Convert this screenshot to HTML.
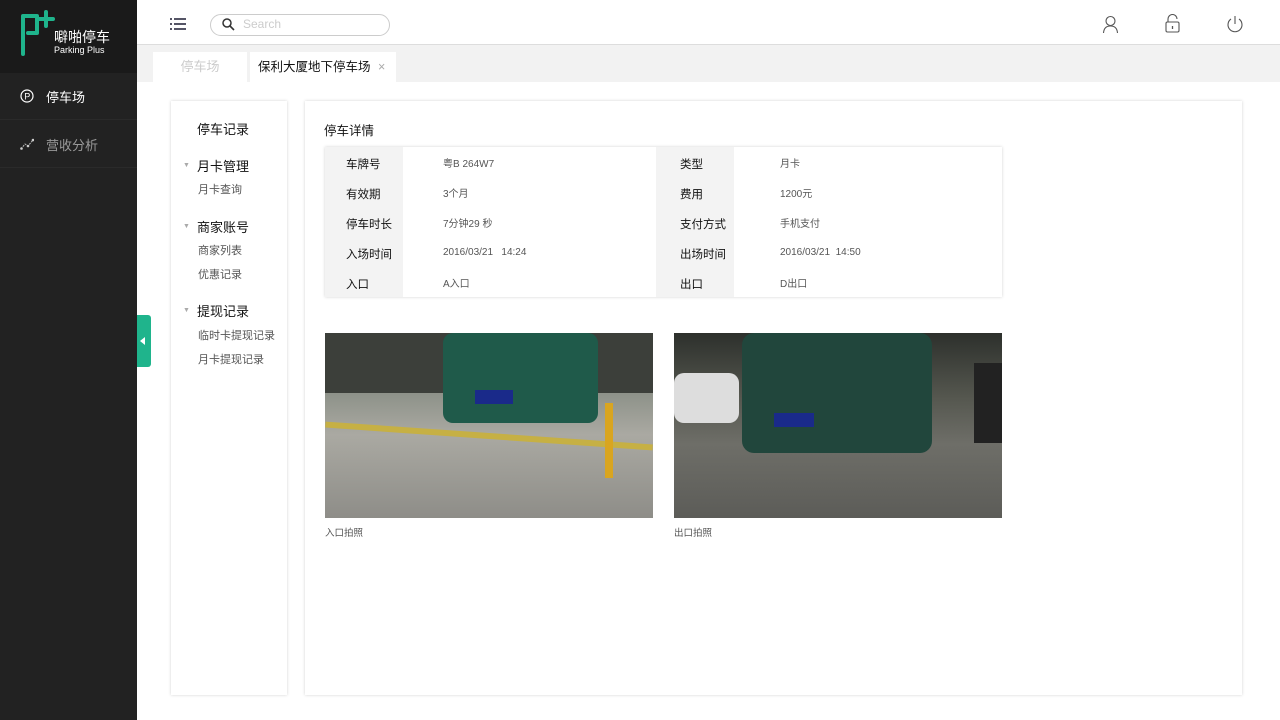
<!DOCTYPE html>
<html><head><meta charset="utf-8"><style>
*{margin:0;padding:0;box-sizing:border-box}
body{width:1280px;height:720px;overflow:hidden;font-family:"Liberation Sans","Noto Sans CJK SC",sans-serif;background:#fff;position:relative;color:#222}
.abs{position:absolute}
.side{left:0;top:0;width:137px;height:720px;background:#222}
.logo{left:0;top:0;width:137px;height:73px;background:#1a1a1a}
.nav{left:0;width:137px;height:47px;border-bottom:1px solid #2a2a2a;font-size:13px;display:flex;align-items:center;padding-left:20px}
.hdr{left:137px;top:0;width:1143px;height:45px;border-bottom:1px solid #ddd;background:#fff}
.tabs{left:137px;top:45px;width:1143px;height:37px;background:#f2f2f2}
.card{background:#fff;box-shadow:0 0 3px rgba(0,0,0,.18)}
.lm{font-size:13px;color:#111}
.ls{font-size:11px;color:#555}
table{border-collapse:collapse}
td{height:30px;font-size:11px}
td.k{background:#f3f3f3;width:78px;padding-left:21px;padding-top:3px;font-size:11.5px;color:#111}
td.k2{padding-left:24px}
td.v{width:253px;padding-left:40px;color:#555;font-size:10px}
td.v2{width:267px;padding-left:46px}
.ph{height:185px;overflow:hidden}
</style></head><body>
<div class="abs side"></div>
<div class="abs logo">
<svg class="abs" style="left:19px;top:9px" width="38" height="48" viewBox="0 0 38 48"><path d="M4 45V7h14v17H9" fill="none" stroke="#1fb48c" stroke-width="4" stroke-linecap="round" stroke-linejoin="round"/><path d="M27 3v14M20 10h14" stroke="#1fb48c" stroke-width="4" stroke-linecap="round"/></svg>
<div class="abs" style="left:54px;top:29px;color:#fff;font-size:14px;font-family:'Noto Sans CJK SC',sans-serif;line-height:16px">噼啪停车</div>
<div class="abs" style="left:54px;top:45px;color:#fff;font-size:9px">Parking Plus</div>
</div>
<div class="abs nav" style="top:73px;color:#fff"><svg width="14" height="14"><circle cx="7" cy="7" r="6" fill="none" stroke="#fff" stroke-width="1.2"/><text x="4.3" y="10.5" font-size="9" fill="#fff">P</text></svg><span style="margin-left:12px">停车场</span></div>
<div class="abs nav" style="top:121px;color:#999"><svg width="14" height="12"><path d="M1 11L5 6 8 8 13 2" fill="none" stroke="#bbb" stroke-width="1" stroke-dasharray="2 1"/><circle cx="1.5" cy="10.5" r="1.3" fill="#ccc"/><circle cx="8" cy="8" r="1.3" fill="#ccc"/><circle cx="13" cy="2" r="1.3" fill="#ccc"/></svg><span style="margin-left:12px">营收分析</span></div>

<div class="abs hdr">
<svg class="abs" style="left:33px;top:18px" width="16" height="12"><g fill="#556"><rect x="0" y="0" width="2" height="2"/><rect x="4" y="0" width="12" height="2"/><rect x="0" y="5" width="2" height="2"/><rect x="4" y="5" width="12" height="2"/><rect x="0" y="10" width="2" height="2"/><rect x="4" y="10" width="12" height="2"/></g></svg>
<div class="abs" style="left:73px;top:14px;width:180px;height:22px;border:1px solid #ccc;border-radius:11px"></div>
<svg class="abs" style="left:85px;top:18px" width="13" height="13"><circle cx="5" cy="5" r="4" fill="none" stroke="#333" stroke-width="1.5"/><path d="M8 8l4 4" stroke="#333" stroke-width="1.6"/></svg>
<div class="abs" style="left:106px;top:17px;font-size:12px;color:#ccc">Search</div>
<svg class="abs" style="left:965px;top:15px" width="17" height="18"><circle cx="8.5" cy="6" r="4.5" fill="none" stroke="#555" stroke-width="1.1"/><path d="M1.5 18Q2 11 8.5 11T15.5 18" fill="none" stroke="#555" stroke-width="1.1"/></svg>
<svg class="abs" style="left:1028px;top:14px" width="15" height="19"><path d="M3 8V5a4.5 4.5 0 0 1 9 0" fill="none" stroke="#555" stroke-width="1.1"/><rect x="1" y="8" width="13" height="10" rx="1.5" fill="none" stroke="#555" stroke-width="1.1"/><path d="M7.5 12v3" stroke="#555" stroke-width="1.3"/></svg>
<svg class="abs" style="left:1089px;top:15px" width="18" height="18"><path d="M5 4a7 7 0 1 0 8 0" fill="none" stroke="#555" stroke-width="1.1"/><path d="M9 1v8" stroke="#555" stroke-width="1.1"/></svg>
</div>
<div class="abs tabs">
<div class="abs" style="left:16px;top:7px;width:94px;height:30px;background:#fff;color:#ccc;font-size:13px;text-align:center;line-height:30px">停车场</div>
<div class="abs" style="left:113px;top:7px;width:146px;height:30px;background:#fff;color:#111;font-size:12.5px;line-height:31px;padding-left:8px">保利大厦地下停车场 <span style="color:#aaa;margin-left:4px">×</span></div>
</div>
<div class="abs" style="left:137px;top:315px;width:14px;height:52px;background:#1fb48c;border-radius:0 3px 3px 0"></div>
<div class="abs" style="left:140px;top:337px;width:0;height:0;border:4px solid transparent;border-right:5px solid #fff;border-left:0"></div>

<div class="abs card" style="left:171px;top:101px;width:116px;height:594px">
<div class="abs lm" style="left:26px;top:18px">停车记录</div>
<div class="abs" style="left:12px;top:61px;font-size:7px;color:#aaa">▼</div><div class="abs lm" style="left:26px;top:55px">月卡管理</div>
<div class="abs ls" style="left:27px;top:80px">月卡查询</div>
<div class="abs" style="left:12px;top:122px;font-size:7px;color:#aaa">▼</div><div class="abs lm" style="left:26px;top:116px">商家账号</div>
<div class="abs ls" style="left:27px;top:141px">商家列表</div>
<div class="abs ls" style="left:27px;top:165px">优惠记录</div>
<div class="abs" style="left:12px;top:206px;font-size:7px;color:#aaa">▼</div><div class="abs lm" style="left:26px;top:200px">提现记录</div>
<div class="abs ls" style="left:27px;top:226px">临时卡提现记录</div>
<div class="abs ls" style="left:27px;top:250px">月卡提现记录</div>
</div>

<div class="abs card" style="left:305px;top:101px;width:937px;height:594px">
<div class="abs" style="left:19px;top:19px;font-size:12.5px;color:#111">停车详情</div>
<div class="abs card" style="left:20px;top:46px;width:677px;height:150px">
<table>
<tr><td class="k">车牌号</td><td class="v">粤B 264W7</td><td class="k k2">类型</td><td class="v v2">月卡</td></tr>
<tr><td class="k">有效期</td><td class="v">3个月</td><td class="k k2">费用</td><td class="v v2">1200元</td></tr>
<tr><td class="k">停车时长</td><td class="v">7分钟29 秒</td><td class="k k2">支付方式</td><td class="v v2">手机支付</td></tr>
<tr><td class="k">入场时间</td><td class="v">2016/03/21&nbsp;&nbsp; 14:24</td><td class="k k2">出场时间</td><td class="v v2">2016/03/21&nbsp; 14:50</td></tr>
<tr><td class="k">入口</td><td class="v">A入口</td><td class="k k2">出口</td><td class="v v2">D出口</td></tr>
</table></div>
<div class="abs ph" style="left:20px;top:232px;width:328px;background:linear-gradient(180deg,#6a6e66 0%,#8a8f86 30%,#aaa9a2 55%,#8e8d88 100%)">
<div class="abs" style="left:0;top:0;width:328px;height:60px;background:#3c3f3a"></div>
<div class="abs" style="left:118px;top:0;width:155px;height:90px;background:#1f5a4a;border-radius:10px"></div>
<div class="abs" style="left:150px;top:57px;width:38px;height:14px;background:#1a2a8a"></div>
<div class="abs" style="left:0;top:100px;width:328px;height:6px;background:#c6b044;transform:rotate(4deg)"></div>
<div class="abs" style="left:280px;top:70px;width:8px;height:75px;background:#d9a520"></div>
</div>
<div class="abs ph" style="left:369px;top:232px;width:328px;background:linear-gradient(180deg,#2d302c 0%,#55574f 35%,#6e6e68 60%,#5c5c58 100%)">
<div class="abs" style="left:0;top:40px;width:65px;height:50px;background:#ddd;border-radius:10px"></div>
<div class="abs" style="left:68px;top:0;width:190px;height:120px;background:#21463c;border-radius:12px"></div>
<div class="abs" style="left:100px;top:80px;width:40px;height:14px;background:#1a2a8a"></div>
<div class="abs" style="left:300px;top:30px;width:28px;height:80px;background:#222"></div>
</div>
<div class="abs" style="left:20px;top:424px;font-size:9.5px;color:#555">入口拍照</div>
<div class="abs" style="left:369px;top:424px;font-size:9.5px;color:#555">出口拍照</div>
</div>
</body></html>
